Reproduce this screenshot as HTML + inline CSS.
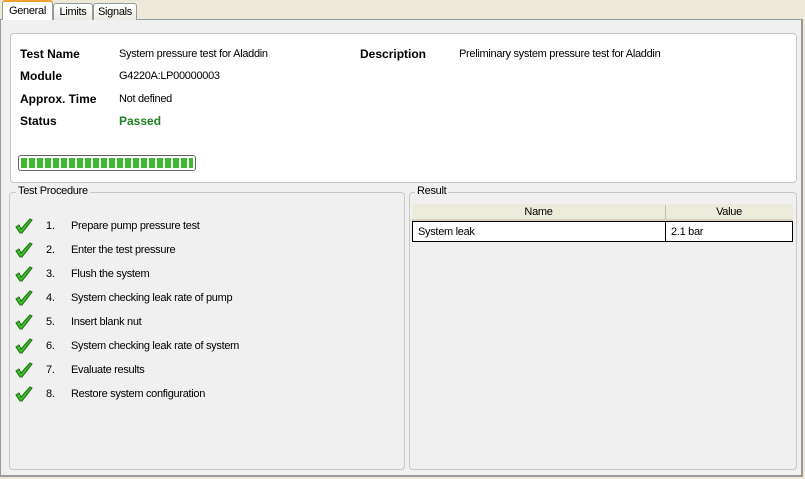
<!DOCTYPE html>
<html><head><style>
*{margin:0;padding:0;box-sizing:border-box}
body{width:805px;height:479px;background:#ece9d8;font-family:"Liberation Sans",sans-serif;font-size:11px;letter-spacing:-0.3px;color:#000;position:relative;overflow:hidden}
.a{position:absolute;white-space:nowrap}
.t{margin-top:2px}
.tab{position:absolute;border:1px solid #919b9c;border-bottom:none;background:linear-gradient(#fff,#ecebe5);border-radius:3px 3px 0 0;text-align:center;font-size:11px;white-space:nowrap}
.page{left:0;top:19px;width:803px;height:458px;background:#f0f0f0;border:1px solid #919b9c;border-right:2px solid #9a9a9a;border-bottom:2px solid #9a9a9a}
.white{left:10px;top:33px;width:787px;height:150px;background:#fff;border:1px solid #c6c6c6;border-radius:4px}
.lbl{position:absolute;font-weight:bold;font-size:12px;letter-spacing:0;white-space:nowrap}
.gb{position:absolute;border:1px solid #c8c8c8;border-radius:4px}
.leg{position:absolute;background:#f0f0f0;padding:0 2px;top:-8px;left:6px;white-space:nowrap}
.step{position:absolute;left:0;width:380px;height:24px}
.chk{position:absolute;left:6px;top:-2px}
</style></head><body>
<div class="a page"></div>
<div class="tab" style="left:53px;top:3px;width:40px;height:17px;line-height:16px">Limits</div>
<div class="tab" style="left:93px;top:3px;width:44px;height:17px;line-height:16px">Signals</div>
<div class="tab" style="left:2px;top:0;width:51px;height:20px;line-height:18px;background:#fff;border-top:2px solid #f0a030">General</div>
<div class="a white"></div>
<div class="lbl" style="left:20px;top:47px">Test Name</div>
<div class="a" style="left:119px;top:48px">System pressure test for Aladdin</div>
<div class="lbl" style="left:360px;top:47px">Description</div>
<div class="a" style="left:459px;top:48px">Preliminary system pressure test for Aladdin</div>
<div class="lbl" style="left:20px;top:69px">Module</div>
<div class="a" style="left:119px;top:70px">G4220A:LP00000003</div>
<div class="lbl" style="left:20px;top:92px">Approx. Time</div>
<div class="a" style="left:119px;top:93px">Not defined</div>
<div class="lbl" style="left:20px;top:114px">Status</div>
<div class="lbl" style="left:119px;top:114px;color:#208020">Passed</div>
<div class="a" style="left:18px;top:155px;width:178px;height:16px;border:1px solid #666;border-radius:3px;background:#fff;padding:2px;display:flex">
<div style="flex:1;background:repeating-linear-gradient(90deg,#3dbb2c 0 6px,#fff 6px 8px)"></div></div>
<div class="gb" style="left:9px;top:192px;width:396px;height:278px">
<div class="leg">Test Procedure</div>
</div>
<div class="a" style="left:9px;top:194px;width:396px">
<div class="step" style="top:26px"><svg class="chk" width="18" height="16" viewBox="0 0 18 16"><path d="M1 9 L4 7 L6 11 L15 1 L17 2 L7 15 L5 15 Z" fill="#3cc22a" stroke="#1a6a10" stroke-width="1"/></svg><span class="a" style="left:37px">1.</span><span class="a" style="left:62px">Prepare pump pressure test</span></div>
<div class="step" style="top:50px"><svg class="chk" width="18" height="16" viewBox="0 0 18 16"><path d="M1 9 L4 7 L6 11 L15 1 L17 2 L7 15 L5 15 Z" fill="#3cc22a" stroke="#1a6a10" stroke-width="1"/></svg><span class="a" style="left:37px">2.</span><span class="a" style="left:62px">Enter the test pressure</span></div>
<div class="step" style="top:74px"><svg class="chk" width="18" height="16" viewBox="0 0 18 16"><path d="M1 9 L4 7 L6 11 L15 1 L17 2 L7 15 L5 15 Z" fill="#3cc22a" stroke="#1a6a10" stroke-width="1"/></svg><span class="a" style="left:37px">3.</span><span class="a" style="left:62px">Flush the system</span></div>
<div class="step" style="top:98px"><svg class="chk" width="18" height="16" viewBox="0 0 18 16"><path d="M1 9 L4 7 L6 11 L15 1 L17 2 L7 15 L5 15 Z" fill="#3cc22a" stroke="#1a6a10" stroke-width="1"/></svg><span class="a" style="left:37px">4.</span><span class="a" style="left:62px">System checking leak rate of pump</span></div>
<div class="step" style="top:122px"><svg class="chk" width="18" height="16" viewBox="0 0 18 16"><path d="M1 9 L4 7 L6 11 L15 1 L17 2 L7 15 L5 15 Z" fill="#3cc22a" stroke="#1a6a10" stroke-width="1"/></svg><span class="a" style="left:37px">5.</span><span class="a" style="left:62px">Insert blank nut</span></div>
<div class="step" style="top:146px"><svg class="chk" width="18" height="16" viewBox="0 0 18 16"><path d="M1 9 L4 7 L6 11 L15 1 L17 2 L7 15 L5 15 Z" fill="#3cc22a" stroke="#1a6a10" stroke-width="1"/></svg><span class="a" style="left:37px">6.</span><span class="a" style="left:62px">System checking leak rate of system</span></div>
<div class="step" style="top:170px"><svg class="chk" width="18" height="16" viewBox="0 0 18 16"><path d="M1 9 L4 7 L6 11 L15 1 L17 2 L7 15 L5 15 Z" fill="#3cc22a" stroke="#1a6a10" stroke-width="1"/></svg><span class="a" style="left:37px">7.</span><span class="a" style="left:62px">Evaluate results</span></div>
<div class="step" style="top:194px"><svg class="chk" width="18" height="16" viewBox="0 0 18 16"><path d="M1 9 L4 7 L6 11 L15 1 L17 2 L7 15 L5 15 Z" fill="#3cc22a" stroke="#1a6a10" stroke-width="1"/></svg><span class="a" style="left:37px">8.</span><span class="a" style="left:62px">Restore system configuration</span></div>
</div>
<div class="gb" style="left:409px;top:192px;width:388px;height:278px">
<div class="leg" style="left:5px">Result</div>
</div>
<div class="a" style="left:412px;top:204px;width:381px;height:17px;background:#ebeadb;border-bottom:2px solid #d8d0c0"></div>
<div class="a" style="left:412px;top:206px;width:253px;text-align:center">Name</div>
<div class="a" style="left:665px;top:205px;width:1px;height:14px;background:#c0c0b0"></div>
<div class="a" style="left:666px;top:206px;width:126px;text-align:center">Value</div>
<div class="a" style="left:412px;top:221px;width:381px;height:21px;background:#fff;border:1px solid #000"></div>
<div class="a" style="left:665px;top:221px;width:1px;height:21px;background:#000"></div>
<div class="a" style="left:418px;top:226px">System leak</div>
<div class="a" style="left:671px;top:226px">2.1 bar</div>
</body></html>
